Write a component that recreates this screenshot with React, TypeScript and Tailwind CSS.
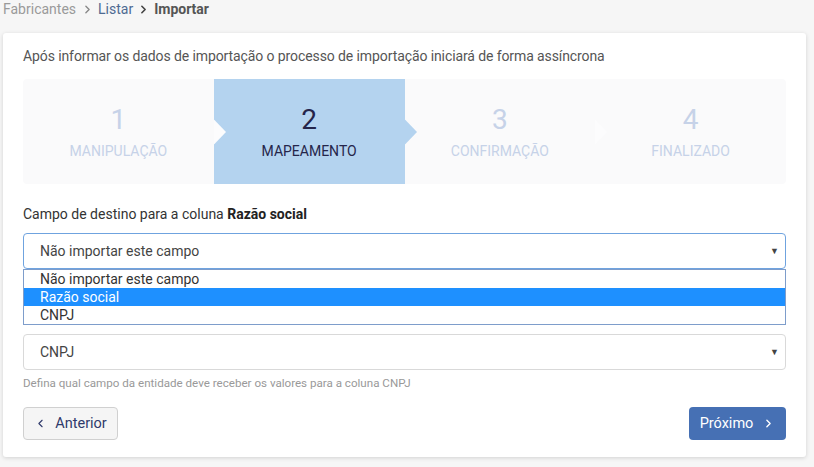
import { ChevronLeft, ChevronRight } from "lucide-react";

type Step = { n: number; label: string };

const steps: Step[] = [
  { n: 1, label: "Manipulação" },
  { n: 2, label: "Mapeamento" },
  { n: 3, label: "Confirmação" },
  { n: 4, label: "Finalizado" },
];

const active = 2;

const Stepper = () => (
  <div className="flex h-[105px] rounded-[4px] bg-[#fafafb] mt-[13px]">
    {steps.map((s, i) => {
      const isActive = s.n === active;
      return (
        <div
          key={s.n}
          className={`relative flex-1 flex flex-col items-center pt-[25px] ${isActive ? "bg-[#b4d3ef]" : ""}`}
        >
          <div className={`text-[28px] leading-[32px] ${isActive ? "text-[#25254a]" : "text-[#c6d2e8]"}`}>{s.n}</div>
          <div className={`mt-[7px] text-[14px] leading-[17px] uppercase ${isActive ? "text-[#25254a]" : "text-[#c6d2e8]"}`}>
            {s.label}
          </div>
          {i < steps.length - 1 && (
            <svg
              className="absolute top-1/2 -translate-y-1/2 -right-[12px] z-10"
              width="12"
              height="25"
              viewBox="0 0 12 25"
            >
              <polygon points="0,0 12,12.5 0,25" fill={isActive ? "#b4d3ef" : "#fcfcfd"} />
            </svg>
          )}
        </div>
      );
    })}
  </div>
);

const Caret = () => <span className="text-[9px] text-[#444] leading-none">▼</span>;

const options = ["Não importar este campo", "Razão social", "CNPJ"];

const App = () => {
  return (
    <div className="min-h-screen bg-[#f6f6f6] pl-[3px] pr-[8px] font-['Roboto',sans-serif] text-[14px]">
      <div className="flex items-center h-[18px] leading-[18px] text-[14px]">
        <span className="text-[#9a9a9a]">Fabricantes</span>
        <ChevronRight size={13} strokeWidth={2.5} className="text-[#888] ml-[5px] mr-[4px]" />
        <span className="text-[#4e6a92]">Listar</span>
        <ChevronRight size={13} strokeWidth={3} className="text-[#444] ml-[4px] mr-[4px]" />
        <span className="font-bold text-[#555]">Importar</span>
      </div>

      <div className="mt-[15px] bg-white rounded-[3px] shadow-[0_1px_4px_rgba(0,0,0,0.15)] px-5 pt-[13px] pb-[17px]">
        <p className="leading-[20px] text-[#555] tracking-[-0.1px]">
          Após informar os dados de importação o processo de importação iniciará de forma assíncrona
        </p>

        <Stepper />

        <div className="mt-[20px] leading-[20px] text-[#333]">
          Campo de destino para a coluna <b className="text-[#222]">Razão social</b>
        </div>
        <div className="relative mt-[9px]">
          <div className="h-[36px] flex items-center justify-between border border-[#6fa3df] rounded-[4px] pl-[16px] pr-[6px] text-[#444]">
            <span>Não importar este campo</span>
            <Caret />
          </div>
          <div className="absolute left-0 right-0 top-full z-20 bg-white border border-[#7e9dcb] h-[56px]">
            {options.map((o, i) => (
              <div
                key={o}
                className={`h-[18px] leading-[18px] pl-[16px] ${i === 1 ? "bg-[#1e90ff] text-white" : "text-[#333]"}`}
              >
                {o}
              </div>
            ))}
          </div>
        </div>
        {/* covered by the open list */}
        <div className="invisible mt-[5px] text-[11.6px] leading-[16px] text-[#999]">
          Defina qual campo da entidade deve receber os valores para a coluna Razão social
        </div>
        <div className="invisible mt-[15px] leading-[20px] text-[#333]">
          Campo de destino para a coluna <b className="text-[#222]">CNPJ</b>
        </div>

        <div className="mt-[9px] h-[36px] flex items-center justify-between border border-[#d9d9d9] rounded-[4px] pl-[16px] pr-[6px] text-[#444]">
          <span>CNPJ</span>
          <Caret />
        </div>
        <div className="mt-[5px] text-[11.6px] leading-[16px] text-[#999]">
          Defina qual campo da entidade deve receber os valores para a coluna CNPJ
        </div>

        <div className="mt-[16px] flex justify-between">
          <button className="h-[33px] w-[95px] flex items-center justify-center gap-[8px] bg-[#f5f5f5] border border-[#d0d0d0] rounded-[4px] text-[#2f3a6b] text-[14.5px]">
            <ChevronLeft size={13} strokeWidth={2} />
            <span>Anterior</span>
          </button>
          <button className="h-[33px] w-[97px] flex items-center justify-center gap-[9px] bg-[#4670b4] rounded-[4px] text-white text-[14.5px]">
            <span>Próximo</span>
            <ChevronRight size={13} strokeWidth={2.5} />
          </button>
        </div>
      </div>
    </div>
  );
};

export default App;
